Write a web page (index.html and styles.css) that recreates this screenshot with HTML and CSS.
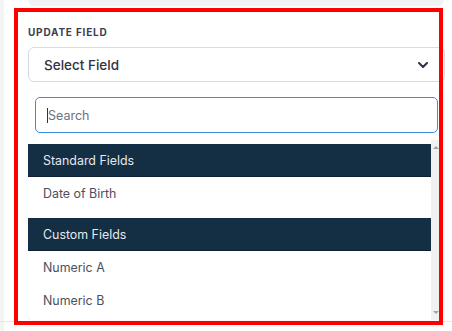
FILE: index.html
```html
<!DOCTYPE html>
<html>
<head>
    <meta charset="utf-8">
    <link rel="stylesheet" href="styles.css">
</head>
<body>
    <div class="top-card"></div>

    <div class="panel">
        <div class="field-label">Update Field</div>

        <div class="select-box">
            <span>Select Field</span>
            <svg class="chevron" width="10" height="6" viewBox="0 0 10 6">
                <polyline points="1,1 5,5 9,1" fill="none" stroke="#2f3344" stroke-width="2" stroke-linecap="round" stroke-linejoin="round"/>
            </svg>
        </div>

        <!-- dropdown menu -->
        <div class="dropdown">
            <div class="search-wrap">
                <div class="search-input">
                    <span class="caret"></span>
                    <span class="placeholder">Search</span>
                </div>
            </div>
            <div class="list">
                <div class="options">
                    <div class="group">
                        <div class="group-title">Standard Fields</div>
                        <div class="option">Date of Birth</div>
                    </div>
                    <div class="group">
                        <div class="group-title">Custom Fields</div>
                        <div class="option">Numeric A</div>
                        <div class="option">Numeric B</div>
                    </div>
                </div>
                <div class="scrollbar">
                    <span class="arrow-up"></span>
                    <span class="arrow-down"></span>
                </div>
            </div>
        </div>
    </div>

    <div class="bottom-line"></div>

    <!-- red highlight frame -->
    <div class="highlight"></div>
</body>
</html>
```

FILE: styles.css
```css
body {
    margin: 0;
    width: 452px;
    height: 331px;
    overflow: hidden;
    position: relative;
    font-family: Inter, "Noto Sans", sans-serif;
    background: linear-gradient(to right, #f4f4f5 4px, #ffffff 4px);
}

.top-card {
    margin-left: 28px;
    width: 416px;
    height: 6px;
    background: #f1f2f4;
    border-radius: 0 0 6px 6px;
}

.panel {
    padding: 20px 7px 0 28px;
}

.field-label {
    font-size: 10px;
    line-height: 12px;
    font-weight: 700;
    letter-spacing: 0.8px;
    text-transform: uppercase;
    color: #3b3f51;
    margin-bottom: 9px;
}

.select-box {
    height: 35px;
    box-sizing: border-box;
    border: 1px solid #d9dbe1;
    border-radius: 6px;
    display: flex;
    align-items: center;
    justify-content: space-between;
    padding: 0 16px 0 15px;
    font-size: 13.5px;
    font-weight: 500;
    color: #2f3344;
}

.chevron {
    display: block;
}

/* menu under the select */
.dropdown {
    margin-top: 8px;
    width: 415px;
    background: #ffffff;
    border-radius: 0 0 6px 6px;
    box-shadow: 0 2px 6px rgba(0, 0, 0, 0.05);
}

.search-wrap {
    padding: 7px 5px 7px 7px;
}

.search-input {
    height: 36px;
    box-sizing: border-box;
    border: 1.5px solid #3d8ee2;
    border-radius: 5px;
    display: flex;
    align-items: center;
    padding-left: 11px;
    font-size: 12.5px;
}

.caret {
    width: 1px;
    height: 15px;
    background: #333333;
}

.placeholder {
    color: #6b7280;
}

.list {
    display: flex;
    height: 180px;
    overflow: hidden;
    border-radius: 0 0 6px 6px;
}

.options {
    flex: 1;
    padding-top: 4px;
}

.group + .group {
    margin-top: 8px;
}

.group-title {
    height: 33px;
    box-sizing: border-box;
    display: flex;
    align-items: center;
    padding-left: 15px;
    background: #142e44;
    border-bottom: 1px solid #0c2234;
    color: #e6e9ee;
    font-size: 12.4px;
}

.option {
    height: 33px;
    display: flex;
    align-items: center;
    padding-left: 15px;
    color: #4b5060;
    font-size: 12.4px;
}

.scrollbar {
    width: 12px;
    background: #f1f1f1;
    position: relative;
}

.arrow-up,
.arrow-down {
    position: absolute;
    left: 2px;
    width: 0;
    height: 0;
    border-left: 3px solid transparent;
    border-right: 3px solid transparent;
}

.arrow-up {
    top: 6px;
    border-bottom: 3px solid #a3a3a3;
}

.arrow-down {
    bottom: 6px;
    border-top: 3px solid #a3a3a3;
}

.bottom-line {
    margin-top: 1px;
    height: 1px;
    background: #e6e7ea;
}

.highlight {
    position: absolute;
    left: 14px;
    top: 8px;
    width: 429px;
    height: 317px;
    box-sizing: border-box;
    border: 4px solid #ff0000;
}
```
